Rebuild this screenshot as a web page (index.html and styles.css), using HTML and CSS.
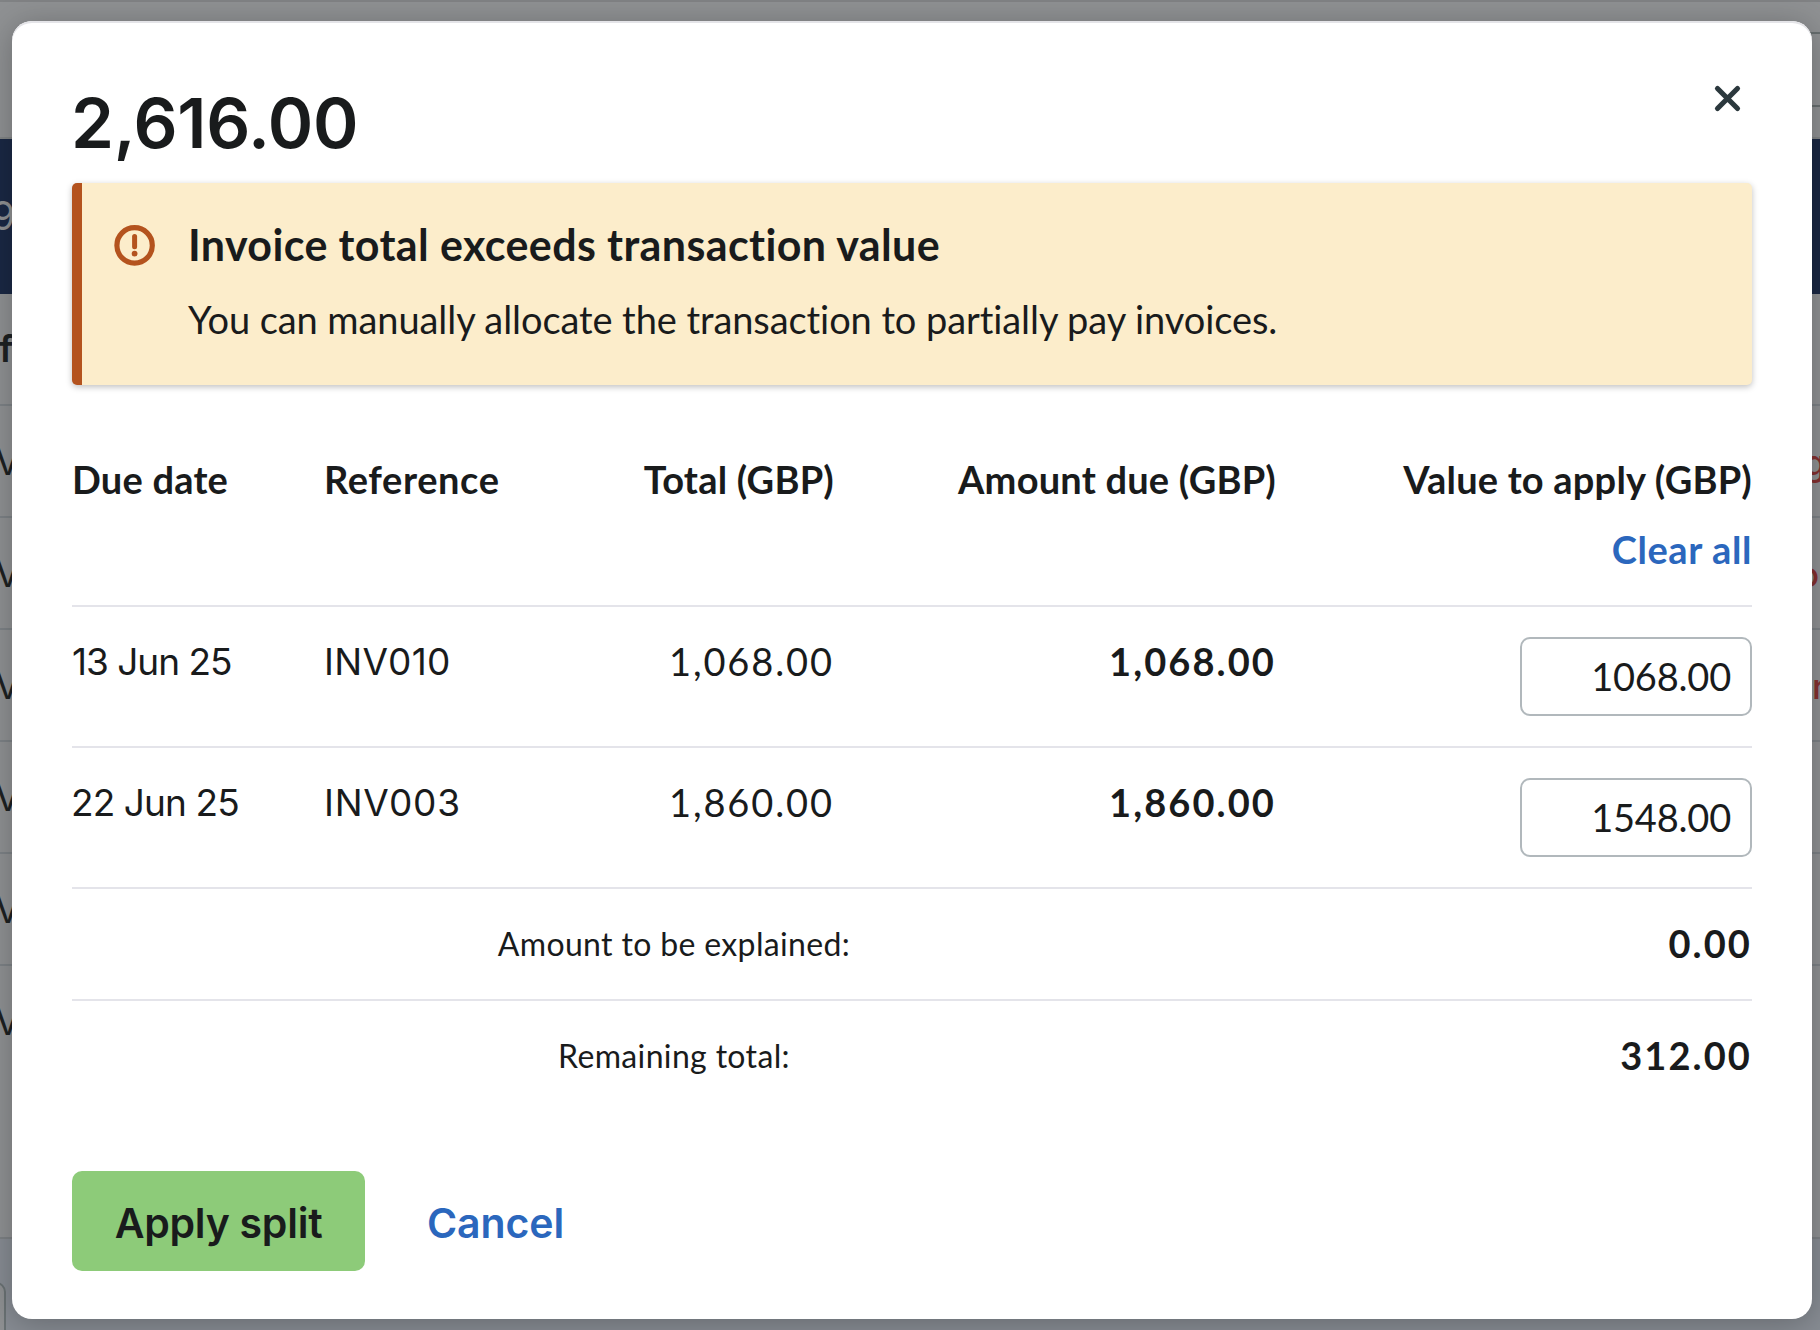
FILE: index.html
```html
<!DOCTYPE html>
<html lang="en">
<head>
<meta charset="utf-8">
<title>Split transaction</title>
<link rel="stylesheet" href="styles.css">
</head>
<body>
<div class="page" aria-hidden="true">
  <div class="page-top"><div class="page-tabs"></div></div>
  <div class="page-band"><span class="page-nine">9</span></div>
  <div class="page-row page-head"><span class="page-f">f</span></div>
  <div class="page-row"><span class="page-v">V</span><span class="page-red page-g">g</span></div>
  <div class="page-row"><span class="page-v">V</span><span class="page-red page-o">o</span></div>
  <div class="page-row"><span class="page-v">V</span><span class="page-red page-r">r</span></div>
  <div class="page-row"><span class="page-v">V</span></div>
  <div class="page-row"><span class="page-v">V</span></div>
  <div class="page-row page-last"><span class="page-v">V</span></div>
  <div class="page-footer"><div class="page-box"></div></div>
</div>

<div class="modal" role="dialog" aria-labelledby="title">
  <header class="modal-head">
    <h1 class="title" id="title">2,616.00</h1>
    <button class="close" aria-label="Close">
      <svg width="29" height="29" viewBox="0 0 29 29"><path d="M4.5 4.5l20 20M24.5 4.5l-20 20" fill="none" stroke="#2b383d" stroke-width="5.2" stroke-linecap="round"/></svg>
    </button>
  </header>

  <section class="alert">
    <svg class="alert-icon" width="42" height="42" viewBox="0 0 42 42">
      <circle cx="21.6" cy="21.4" r="17.7" fill="none" stroke="#b4531e" stroke-width="5.2"/>
      <path d="M21.6 12.6v10.2" stroke="#b4531e" stroke-width="5" stroke-linecap="round"/>
      <circle cx="21.6" cy="29.6" r="2.9" fill="#b4531e"/>
    </svg>
    <div>
      <h2 class="alert-title">Invoice total exceeds transaction value</h2>
      <p class="alert-text">You can manually allocate the transaction to partially pay invoices.</p>
    </div>
  </section>

  <div class="table">
    <div class="row head">
      <div class="h-date">Due date</div>
      <div class="h-ref">Reference</div>
      <div class="right h-total">Total (GBP)</div>
      <div class="right">Amount due (GBP)</div>
      <div class="right">Value to apply (GBP)<a class="clear">Clear all</a></div>
    </div>
    <div class="row item">
      <div class="date date-narrow">13 Jun 25</div>
      <div class="ref">INV010</div>
      <div class="right num">1,068.00</div>
      <div class="right num strong">1,068.00</div>
      <div class="right"><input class="field" value="1068.00"></div>
    </div>
    <div class="row item">
      <div class="date">22 Jun 25</div>
      <div class="ref ref-wide">INV003</div>
      <div class="right num">1,860.00</div>
      <div class="right num strong">1,860.00</div>
      <div class="right"><input class="field" value="1548.00"></div>
    </div>
    <div class="row sum">
      <div class="sum-label">Amount to be explained:</div>
      <div class="right num strong">0.00</div>
    </div>
    <div class="row sum last">
      <div class="sum-label">Remaining total:</div>
      <div class="right num strong">312.00</div>
    </div>
  </div>

  <footer class="actions">
    <button class="apply">Apply split</button>
    <a class="cancel">Cancel</a>
  </footer>
</div>
</body>
</html>
```
FILE: styles.css
```css
* { box-sizing: border-box; margin: 0; }

body {
  position: relative;
  width: 1820px;
  height: 1330px;
  overflow: hidden;
  color: #191b1c;
  background: #8f9193;
  font: 400 38px/54px Lato, "Open Sans", sans-serif;
}

/* Dimmed page behind the dialog */
.page { height: 1330px; overflow: hidden; }
.page-top {
  height: 139px;
  padding-top: 30px;
  border-top: 2px solid #808284;
  border-bottom: 2px solid #818485;
}
.page-tabs {
  height: 75px;
  margin-left: 900px;
  border-top: 2px solid #676e6f;
  border-bottom: 2px solid #676e6f;
}
.page-band { height: 155px; padding-top: 50px; background: #1a2844; color: #8f9193; }
.page-nine { display: block; margin-left: -9px; font: 400 39px/54px Inter, sans-serif; }
.page-row {
  display: flex;
  justify-content: space-between;
  height: 112px;
  padding-top: 29px;
  border-bottom: 2px solid #7d8286;
  color: #1d2122;
}
.page-f { margin-left: -1px; font: 600 37px/54px Inter, sans-serif; }
.page-head { padding-top: 28px; }
.page-v { margin-left: -5px; font: 400 37px/54px Inter, sans-serif; }
.page-red { width: 8px; overflow: hidden; color: #84302f; font: 500 35px/54px Inter, sans-serif; }
.page-g { text-indent: -8px; }
.page-o { text-indent: -14px; }
.page-r { text-indent: 0; }
.page-last { height: 273px; border-bottom-color: #7d8184; }
.page-footer { height: 91px; padding-top: 43px; background: #878c93; }
.page-box {
  width: 26px;
  height: 80px;
  margin-left: -20px;
  border: 2px solid #6a7274;
  border-radius: 10px;
  background: #8f9193;
}

/* Dialog */
.modal {
  position: absolute;
  left: 12px;
  top: 21px;
  width: 1800px;
  height: 1298px;
  padding: 61px 60px 0;
  border-radius: 20px;
  background: #fff;
  box-shadow: inset 0 2px 0 #e4e4e8, 0 4px 32px rgba(0, 0, 0, .26);
}
.modal-head { display: flex; justify-content: space-between; height: 101px; }
.title { font: 600 69px/80px Inter, sans-serif; letter-spacing: -.28px; margin-left: -1px; padding-top: 1px; }
.close { width: 29px; height: 29px; margin: 2px 10px 0 0; padding: 0; border: 0; background: none; }
.close svg { display: block; }

.alert {
  display: flex;
  height: 202px;
  padding: 33px 0 0 31px;
  border-left: 10px solid #b4531e;
  border-radius: 5px;
  background: #fcedcb;
  box-shadow: 0 2px 6px rgba(0, 0, 0, .25);
}
.alert-icon { margin: 8px 33px 0 0; }
.alert-title { padding-top: 2px; font-size: 43px; font-weight: 700; line-height: 54px; letter-spacing: .38px; white-space: nowrap; }
.alert-text { margin-top: 20px; letter-spacing: -.08px; white-space: nowrap; }

.table { margin-top: 40px; }
.row {
  display: grid;
  grid-template-columns: 252px 220px 290px 442px 476px;
  height: 141px;
  padding-top: 27px;
  border-bottom: 2px solid #e4e4ea;
  white-space: nowrap;
}
.right { text-align: right; }
.head { height: 182px; padding-top: 27px; font-weight: 700; letter-spacing: .2px; }
.h-ref { letter-spacing: .6px; }
.clear { display: block; margin-top: 16px; color: #2b67bd; letter-spacing: .6px; }
.date, .ref { padding-top: 1px; font: 400 37px/54px Inter, sans-serif; }
.date { letter-spacing: -.9px; margin-left: -1px; }
.date-narrow { letter-spacing: -1.02px; margin-left: 0; }
.ref { letter-spacing: .33px; }
.ref-wide { letter-spacing: .7px; }
.num { letter-spacing: 1.9px; }
.strong { font-weight: 700; letter-spacing: 2.1px; }
.field {
  display: block;
  width: 232px;
  height: 79px;
  margin: 3px 0 0 auto;
  padding: 0 19px 2px 0;
  border: 2px solid #b1b8bc;
  border-radius: 10px;
  background: #fff;
  color: inherit;
  font: inherit;
  letter-spacing: -.2px;
  text-align: right;
}
.sum { grid-template-columns: 1204px 476px; height: 112px; }
.last { border-bottom: 0; }
.sum-label { padding-top: 1px; font-size: 32px; letter-spacing: .35px; text-align: center; }

.actions { display: flex; align-items: center; gap: 62px; margin-top: 58px; }
.apply {
  width: 293px;
  height: 100px;
  padding: 3px 0 0;
  border: 0;
  border-radius: 10px;
  background: #8dcb79;
  color: inherit;
  font: 600 41px/54px Inter, sans-serif;
  letter-spacing: -.26px;
}
.cancel { padding-top: 3px; color: #2b67bd; font: 600 41px/54px Inter, sans-serif; letter-spacing: -.09px; }
```
